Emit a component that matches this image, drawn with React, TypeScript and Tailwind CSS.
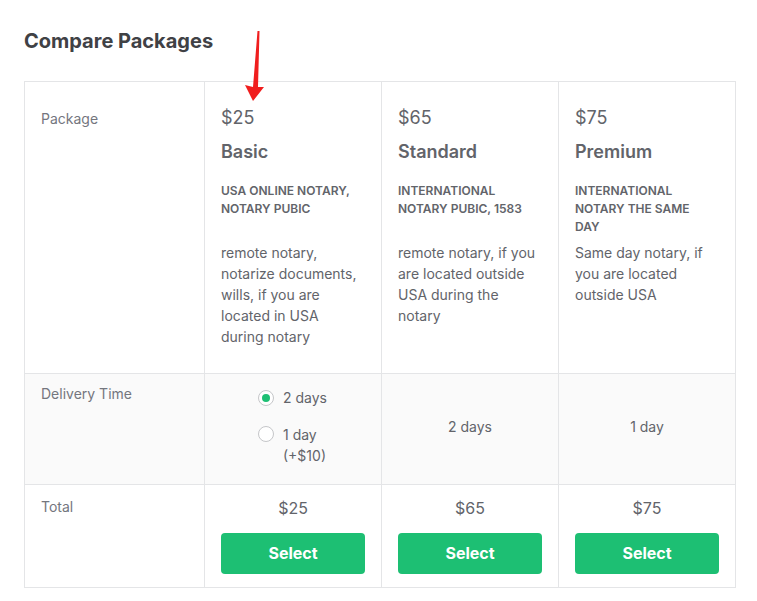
import React from "react";

const font = { fontFamily: "Inter, 'Liberation Sans', sans-serif" };

const pkgs = [
  {
    price: "$25",
    name: "Basic",
    sub: "USA ONLINE NOTARY, NOTARY PUBIC",
    desc: "remote notary, notarize documents, wills, if you are located in USA during notary",
  },
  {
    price: "$65",
    name: "Standard",
    sub: "INTERNATIONAL NOTARY PUBIC, 1583",
    desc: "remote notary, if you are located outside USA during the notary",
  },
  {
    price: "$75",
    name: "Premium",
    sub: "INTERNATIONAL NOTARY THE SAME DAY",
    desc: "Same day notary, if you are located outside USA",
  },
];

export default function App() {
  return (
    <div className="relative w-[757px] h-[601px] bg-white" style={font}>
      <div className="pl-6 pt-[28px]">
        <h2 className="text-[20px] leading-[26px] font-bold text-[#404145]">Compare Packages</h2>
        <div className="mt-[27px] w-[712px] border border-[#e4e5e7] grid grid-cols-[179px_177px_177px_177px]">
          {/* Row 1 */}
          <div className="h-[291px] pl-4 pt-[26px] text-[14px] leading-[21px] text-[#74767e]">Package</div>
          {pkgs.map((p) => (
            <div key={p.name} className="border-l border-[#e4e5e7] pl-4 pr-[20px] pt-[24px]">
              <div className="text-[18px] leading-[24px] text-[#62646a]">{p.price}</div>
              <div className="mt-[10px] text-[18px] leading-[24px] font-semibold text-[#62646a]">{p.name}</div>
              <div className="mt-[18px] min-h-[54px] text-[12px] leading-[18px] font-semibold text-[#62646a] uppercase">{p.sub}</div>
              <div className="mt-[6px] text-[14px] leading-[21px] text-[#62646a]">{p.desc}</div>
            </div>
          ))}
          {/* Row 2 */}
          <div className="h-[111px] bg-[#fafafa] border-t border-[#e4e5e7] pl-4 pt-[9px] text-[14px] leading-[21px] text-[#74767e]">Delivery Time</div>
          <div className="bg-[#fafafa] border-t border-l border-[#e4e5e7] pl-[53px] pt-[13px] text-[14px] leading-[21px] text-[#62646a]">
            <div className="flex items-center gap-[9px]">
              <span className="w-[16px] h-[16px] rounded-full border border-[#c5c6c9] bg-white flex items-center justify-center">
                <span className="w-[8px] h-[8px] rounded-full bg-[#1dbf73]" />
              </span>
              <span>2 days</span>
            </div>
            <div className="mt-[16px] flex items-start gap-[9px]">
              <span className="mt-[2px] w-[16px] h-[16px] rounded-full border border-[#c5c6c9] bg-white" />
              <span>1 day<br />(+$10)</span>
            </div>
          </div>
          <div className="bg-[#fafafa] border-t border-l border-[#e4e5e7] pb-[5px] flex items-center justify-center text-[14px] text-[#62646a]">2 days</div>
          <div className="bg-[#fafafa] border-t border-l border-[#e4e5e7] pb-[5px] flex items-center justify-center text-[14px] text-[#62646a]">1 day</div>
          {/* Row 3 */}
          <div className="h-[103px] border-t border-[#e4e5e7] pl-4 pt-[11px] text-[14px] leading-[21px] text-[#74767e]">Total</div>
          {pkgs.map((p) => (
            <div key={p.name + "t"} className="border-t border-l border-[#e4e5e7] px-4 pt-[11px] flex flex-col items-center">
              <div className="text-[16px] leading-[24px] text-[#62646a]">{p.price}</div>
              <button className="mt-[13px] w-[144px] h-[41px] rounded-[4px] bg-[#1dbf73] text-white text-[16px] font-bold leading-[20px] pb-[1px]">Select</button>
            </div>
          ))}
        </div>
      </div>
      <svg className="absolute left-[240px] top-[28px]" width="30" height="76" viewBox="0 0 30 76">
        <path d="M17.5 3 L19.5 3 L18 59 L24 59 L13 73 L5 57 L13 59 Z" fill="#f01e1e" />
      </svg>
    </div>
  );
}
